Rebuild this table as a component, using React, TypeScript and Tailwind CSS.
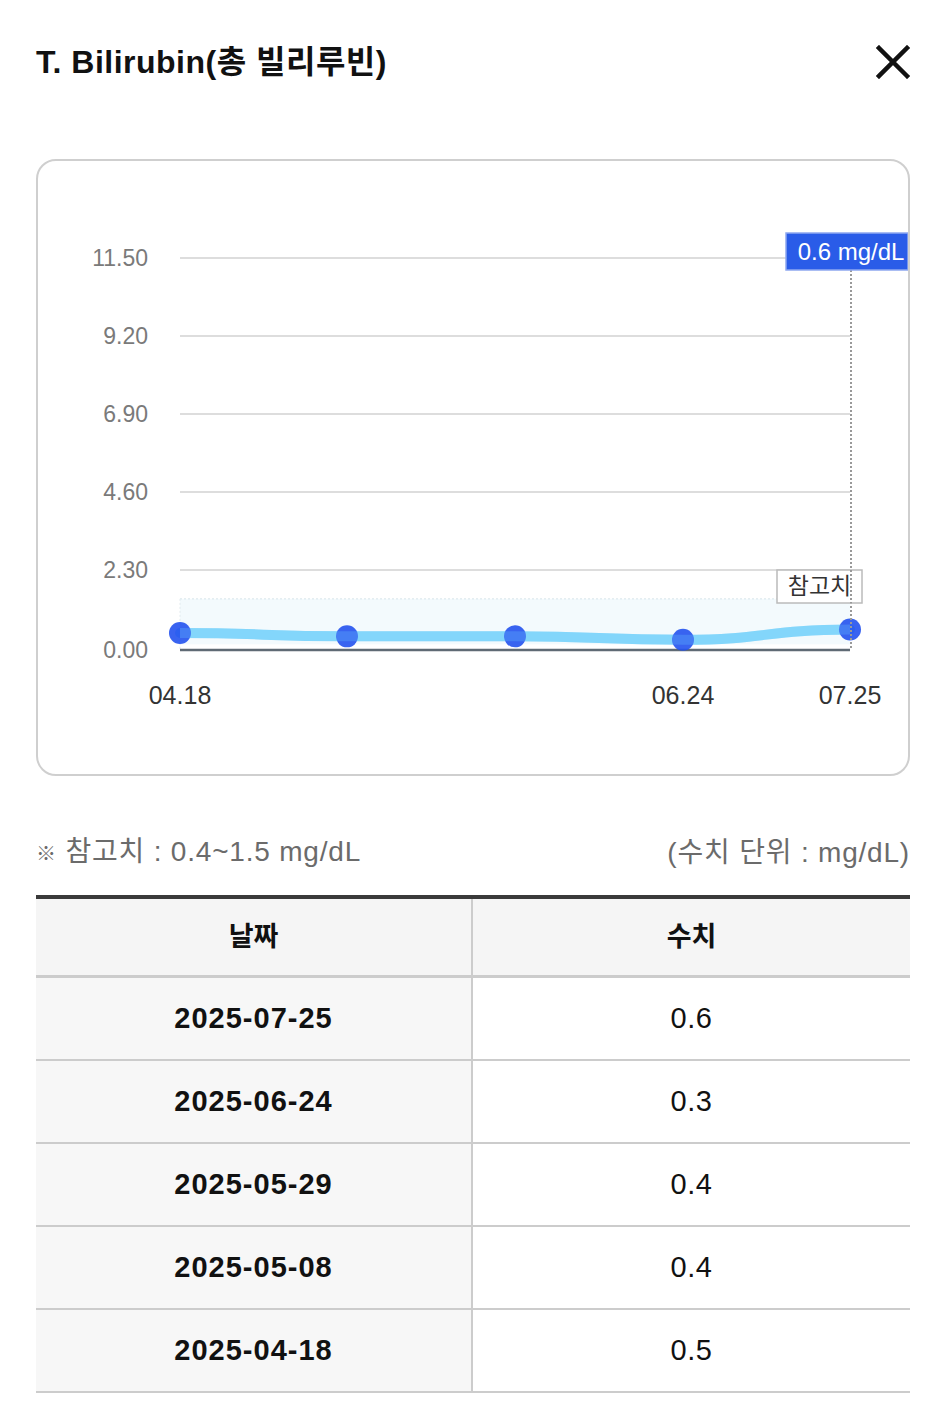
import React from "react";

const font = { fontFamily: '"Liberation Sans", "Noto Sans CJK KR", sans-serif' };

const yTicks = [
  { v: "11.50", y: 258 },
  { v: "9.20", y: 336 },
  { v: "6.90", y: 414 },
  { v: "4.60", y: 492 },
  { v: "2.30", y: 570 },
];

const base = 650;
const scale = 392 / 11.5;
const pts = [
  { x: 180, v: 0.5 },
  { x: 347, v: 0.4 },
  { x: 515, v: 0.4 },
  { x: 683, v: 0.3 },
  { x: 850, v: 0.6 },
].map((p) => ({ x: p.x, y: base - p.v * scale }));

const rows = [
  ["2025-07-25", "0.6"],
  ["2025-06-24", "0.3"],
  ["2025-05-29", "0.4"],
  ["2025-05-08", "0.4"],
  ["2025-04-18", "0.5"],
];

function Chart() {
  const linePath = pts
    .map((p, i) => {
      if (i === 0) return `M ${p.x} ${p.y}`;
      const prev = pts[i - 1];
      const cx = (prev.x + p.x) / 2;
      return `C ${cx} ${prev.y} ${cx} ${p.y} ${p.x} ${p.y}`;
    })
    .join(" ");
  const bandTop = base - 1.5 * scale;
  const bandBottom = base - 0.4 * scale;
  return (
    <svg width={870} height={613} viewBox="38 161 870 613" className="block">
      {yTicks.map((t) => (
        <g key={t.v}>
          <line x1={180} x2={850} y1={t.y} y2={t.y} stroke="#dddddd" strokeWidth={2} />
          <text x={148} y={t.y + 8} textAnchor="end" fontSize={23} fill="#7a7a7a" style={font}>
            {t.v}
          </text>
        </g>
      ))}
      <text x={148} y={base + 8} textAnchor="end" fontSize={23} fill="#7a7a7a" style={font}>
        0.00
      </text>
      <rect x={180} y={bandTop} width={670} height={bandBottom - bandTop + 8} fill="#f3fafd" />
      <line x1={180} x2={850} y1={bandTop} y2={bandTop} stroke="#d6e4ea" strokeWidth={1} strokeDasharray="2 2" />
      <line x1={180} x2={180} y1={bandTop} y2={base} stroke="#e2eaee" strokeWidth={1} strokeDasharray="2 2" />
      <line x1={180} x2={850} y1={base} y2={base} stroke="#5f6a74" strokeWidth={2.5} />
      <path d={linePath} fill="none" stroke="#7fd4fa" strokeWidth={10} strokeLinecap="round" />
      {pts.map((p, i) => (
        <circle key={i} cx={p.x} cy={p.y} r={11} fill="#2452ee" fillOpacity={0.9} />
      ))}
      <path d={linePath} fill="none" stroke="#8fdcff" strokeOpacity={0.25} strokeWidth={10} />
      <line x1={851} x2={851} y1={270} y2={base} stroke="#999999" strokeWidth={2} strokeDasharray="2 2" />
      <rect x={777} y={570} width={85} height={33} fill="#ffffff" stroke="#bbbbbb" strokeWidth={1.5} />
      <text x={819.5} y={594} textAnchor="middle" fontSize={23} fill="#333333" style={font}>
        참고치
      </text>
      <line x1={851} x2={851} y1={570} y2={603} stroke="#999999" strokeWidth={2} strokeDasharray="2 2" />
      <rect x={786} y={233} width={122} height={37} fill="#2a5ce8" stroke="#8fa8f0" strokeWidth={1.5} />
      <text x={851} y={260} textAnchor="middle" fontSize={24} fill="#ffffff" style={font}>
        0.6 mg/dL
      </text>
      {[
        { x: 180, t: "04.18" },
        { x: 683, t: "06.24" },
        { x: 850, t: "07.25" },
      ].map((l) => (
        <text key={l.t} x={l.x} y={704} textAnchor="middle" fontSize={25} fill="#333333" style={font}>
          {l.t}
        </text>
      ))}
    </svg>
  );
}

export default function App() {
  return (
    <div className="min-h-[1425px] w-[946px] bg-white px-[36px] pt-[44px]" style={font}>
      <div className="flex h-[36px] items-center justify-between">
        <h1 className="text-[32px] font-bold leading-[36px] tracking-[0.5px] text-[#111]">
          T. Bilirubin(총 빌리루빈)
        </h1>
        <svg width={34} height={34} viewBox="0 0 34 34" className="block">
          <path d="M3 3 L31 31 M31 3 L3 31" stroke="#111" strokeWidth={4.5} strokeLinecap="square" />
        </svg>
      </div>

      <div className="mt-[79px] h-[617px] w-[874px] overflow-hidden rounded-[20px] border-2 border-[#cfcfcf]">
        <Chart />
      </div>

      <div className="mt-[61px] flex h-[32px] items-center justify-between text-[28px] leading-[32px] tracking-[0.8px] text-[#6b6b6b]">
        <span>
          <span className="text-[20px] font-bold">※</span> 참고치 : 0.4~1.5 mg/dL
        </span>
        <span>(수치 단위 : mg/dL)</span>
      </div>

      <div className="mt-[26px] w-[874px] border-t-4 border-[#3a3a3a]">
        <div className="flex h-[79px] border-b-[3px] border-[#cccccc] bg-[#f5f5f5]">
          <div className="flex w-[437px] items-center justify-center border-r-2 border-[#cccccc] text-[27px] font-bold text-[#111]">
            날짜
          </div>
          <div className="flex flex-1 items-center justify-center text-[27px] font-bold text-[#111]">수치</div>
        </div>
        {rows.map(([d, v]) => (
          <div key={d} className="flex h-[83px] border-b-2 border-[#cccccc]">
            <div className="flex w-[437px] items-center justify-center border-r-2 border-[#cccccc] bg-[#f7f7f7] text-[29px] font-bold tracking-[1px] text-[#111]">
              {d}
            </div>
            <div className="flex flex-1 items-center justify-center bg-white text-[29px] tracking-[0.5px] text-[#111]">
              {v}
            </div>
          </div>
        ))}
      </div>
    </div>
  );
}
